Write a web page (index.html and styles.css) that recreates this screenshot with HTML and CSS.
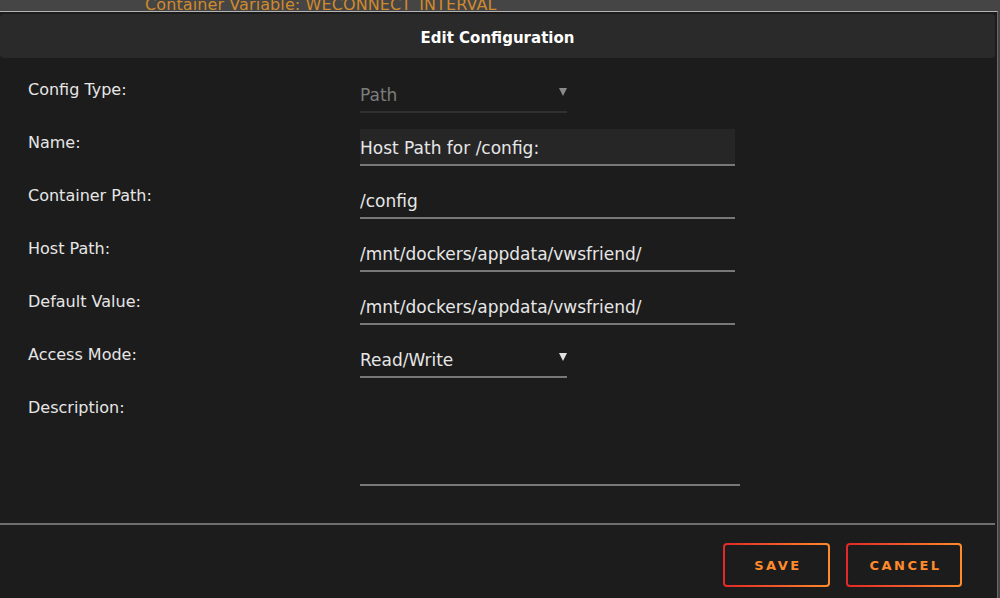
FILE: index.html
```html
<!DOCTYPE html>
<html lang="en">
<head>
  <meta charset="UTF-8" />
  <meta name="viewport" content="width=device-width, initial-scale=1.0"/>
  <title>Edit Configuration</title>
  <link rel="stylesheet" href="styles.css">
</head>
<body>
  <div class="behind">Container Variable: WECONNECT_INTERVAL</div>

  <div class="dialog">
    <div class="titlebar">Edit Configuration</div>

    <form class="form">
      <div class="row">
        <label>Config Type:</label>
        <div class="select disabled"><span>Path</span><i class="arrow"></i></div>
      </div>
      <div class="row">
        <label for="name">Name:</label>
        <input type="text" id="name" class="focused" value="Host Path for /config:" />
      </div>
      <div class="row">
        <label for="target">Container Path:</label>
        <input type="text" id="target" value="/config" />
      </div>
      <div class="row">
        <label for="host">Host Path:</label>
        <input type="text" id="host" value="/mnt/dockers/appdata/vwsfriend/" />
      </div>
      <div class="row">
        <label for="default">Default Value:</label>
        <input type="text" id="default" value="/mnt/dockers/appdata/vwsfriend/" />
      </div>
      <div class="row">
        <label>Access Mode:</label>
        <div class="select"><span>Read/Write</span><i class="arrow"></i></div>
      </div>
      <div class="row tall">
        <label for="desc">Description:</label>
        <textarea id="desc"></textarea>
      </div>
    </form>

    <div class="buttons">
      <button type="button" class="save">Save</button>
      <button type="button" class="cancel">Cancel</button>
    </div>
  </div>
</body>
</html>
```

FILE: styles.css
```css
body {
  margin: 0;
  background-color: #454545;
  font-family: 'DejaVu Sans', sans-serif;
  color: #e6e6e6;
  overflow: hidden;
}
.behind {
  height: 11px;
  line-height: 9px;
  padding-left: 145px;
  color: #d08a2c;
  font-size: 16px;
  letter-spacing: 0.1px;
  overflow: hidden;
  white-space: nowrap;
}
.dialog {
  width: 998px;
  height: 600px;
  background-color: #1c1c1c;
  border-top: 1px solid #b4b4b4;
  border-right: 1px solid #6a6a6a;
  box-sizing: border-box;
  padding-top: 2px;
}
.titlebar {
  height: 44px;
  box-sizing: border-box;
  padding-top: 4px;
  margin-right: 2px;
  background-color: #2a2a2a;
  border-radius: 4px;
  display: flex;
  align-items: center;
  justify-content: center;
  font-weight: bold;
  font-size: 15px;
  color: #fff;
}
.form {
  padding: 18px 0 0 28px;
  display: flex;
  flex-direction: column;
  gap: 16px;
}
.row {
  display: grid;
  grid-template-columns: 332px auto;
  align-items: start;
}
.row label {
  font-size: 16px;
  line-height: 27px;
  color: #e6e6e6;
}
input[type="text"],
.select,
textarea {
  height: 37px;
  box-sizing: border-box;
  border: none;
  border-bottom: 2px solid #787878;
  background: transparent;
  color: #e6e6e6;
  font-family: inherit;
  font-size: 17px;
  padding: 2px 0 0 0;
  outline: none;
}
input[type="text"] {
  width: 375px;
}
input.focused {
  background-color: #262626;
}
.select {
  width: 207px;
  display: flex;
  align-items: center;
  justify-content: space-between;
}
.select.disabled {
  color: #7d7d7d;
  border-bottom-color: #303030;
}
.arrow {
  width: 0;
  height: 0;
  border-left: 4px solid transparent;
  border-right: 4px solid transparent;
  border-top: 8px solid #e0e0e0;
  margin: 0 0 6px 0;
}
.select.disabled .arrow {
  border-top-color: #8a8a8a;
}
.row.tall {
  margin-top: -3px;
}
.row.tall label {
  margin-top: 3px;
}
textarea {
  width: 380px;
  height: 95px;
  resize: none;
}
.buttons {
  margin-top: 37px;
  border-top: 2px solid #6e6e6e;
  margin-right: 2px;
  padding: 18px 33px 0 0;
  display: flex;
  justify-content: flex-end;
  gap: 16px;
}
button {
  height: 44px;
  padding: 0 0 0 3px;
  border: 2px solid transparent;
  border-radius: 4px;
  background:
    linear-gradient(#1c1c1c, #1c1c1c) padding-box,
    linear-gradient(90deg, #e22828, #ff8b2c) border-box;
  color: #ff8b2c;
  font-family: inherit;
  font-weight: bold;
  font-size: 13px;
  letter-spacing: 2.5px;
  text-transform: uppercase;
  cursor: pointer;
}
.save {
  width: 107px;
}
.cancel {
  width: 116px;
}
```
